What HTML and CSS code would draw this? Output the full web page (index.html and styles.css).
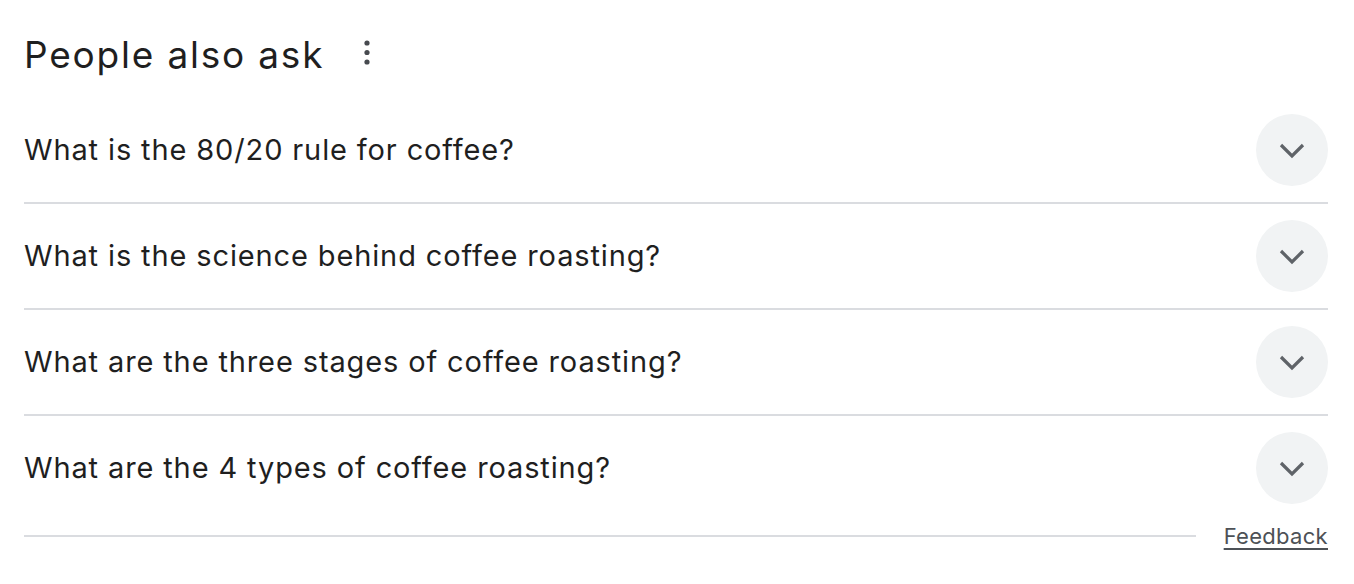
FILE: index.html
```html
<!DOCTYPE html>
<html>
<head>
<meta charset="utf-8">
<link rel="stylesheet" href="styles.css">
</head>
<body>
<div class="paa">
  <div class="header">
    <h2 class="title">People also ask</h2>
    <span class="kebab" aria-label="More options">
      <svg width="6" height="26" viewBox="0 0 6 26"><circle cx="3" cy="3" r="2.6" fill="#474a4f"/><circle cx="3" cy="12.5" r="2.6" fill="#474a4f"/><circle cx="3" cy="22" r="2.6" fill="#474a4f"/></svg>
    </span>
  </div>
  <div class="list">
    <div class="row"><span class="q">What is the 80/20 rule for coffee?</span><span class="btn"><svg width="26" height="16" viewBox="0 0 26 16"><path d="M2 2 L13 13 L24 2" fill="none" stroke="#5f6368" stroke-width="3.2"/></svg></span></div>
    <div class="row"><span class="q">What is the science behind coffee roasting?</span><span class="btn"><svg width="26" height="16" viewBox="0 0 26 16"><path d="M2 2 L13 13 L24 2" fill="none" stroke="#5f6368" stroke-width="3.2"/></svg></span></div>
    <div class="row"><span class="q">What are the three stages of coffee roasting?</span><span class="btn"><svg width="26" height="16" viewBox="0 0 26 16"><path d="M2 2 L13 13 L24 2" fill="none" stroke="#5f6368" stroke-width="3.2"/></svg></span></div>
    <div class="row"><span class="q">What are the 4 types of coffee roasting?</span><span class="btn"><svg width="26" height="16" viewBox="0 0 26 16"><path d="M2 2 L13 13 L24 2" fill="none" stroke="#5f6368" stroke-width="3.2"/></svg></span></div>
  </div>
  <div class="footer">
    <div class="rule"></div>
    <a class="feedback" href="#">Feedback</a>
  </div>
</div>
</body>
</html>
```
FILE: styles.css
```css
html, body {
  margin: 0;
  padding: 0;
  background: #fff;
}
body {
  font-family: Inter, Roboto, "Liberation Sans", Arial, sans-serif;
  color: #1f1f1f;
}
.paa {
  padding: 0 26px 0 24px;
}
.header {
  height: 98px;
  display: flex;
  align-items: center;
  gap: 40px;
}
.title {
  margin: 0;
  font-size: 37px;
  font-weight: 400;
  letter-spacing: 1.8px;
  color: #1f1f1f;
  padding-top: 10px;
}
.kebab {
  display: flex;
  align-items: center;
  padding-top: 8px;
}
.kebab svg { display: block; }
.row {
  height: 104px;
  border-bottom: 2px solid #dadce0;
  display: flex;
  align-items: center;
  justify-content: space-between;
}
.row:last-child {
  border-bottom: none;
}
.q {
  font-size: 29px;
  letter-spacing: 0.87px;
  color: #1f1f1f;
  padding-bottom: 2px;
}
.btn {
  width: 72px;
  height: 72px;
  border-radius: 50%;
  background: #f1f3f4;
  display: flex;
  align-items: center;
  justify-content: center;
}
.btn svg { display: block; margin-top: 2px; }
.footer {
  display: flex;
  align-items: center;
  gap: 28px;
  height: 31px;
}
.rule {
  flex: 1;
  height: 2px;
  background: #dadce0;
}
.feedback {
  font-size: 22px;
  letter-spacing: 0.3px;
  color: #4d5156;
  text-decoration: underline;
  text-decoration-thickness: 2px;
  text-underline-offset: 4px;
}
```
